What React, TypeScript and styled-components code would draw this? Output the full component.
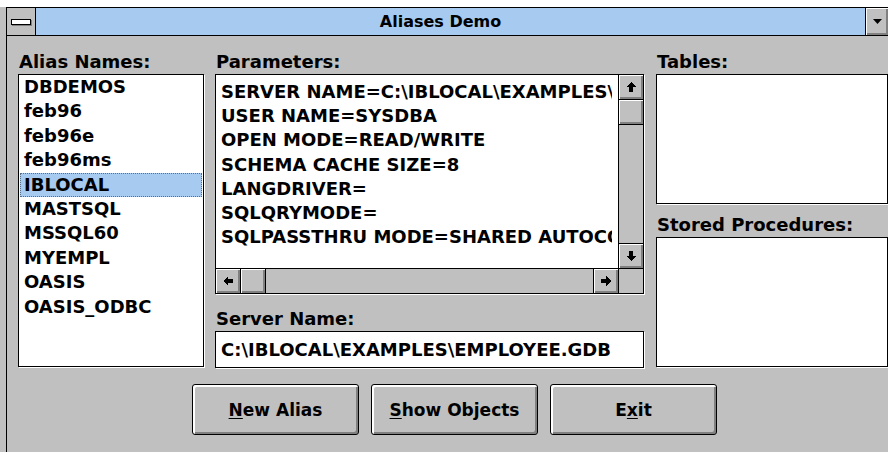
import React from "react";
import styled, { createGlobalStyle } from "styled-components";

const GlobalStyle = createGlobalStyle`
  html, body {
    margin: 0;
    padding: 0;
    overflow: hidden;
  }
  body {
    font-family: "DejaVu Sans", "Liberation Sans", sans-serif;
    color: #000;
  }
`;

const FACE = "#c0c0c0";
const SHADOW = "#808080";
const SELECT = "#a6caf0";

const Desktop = styled.div`
  width: 888px;
  height: 452px;
  box-sizing: border-box;
  background: ${FACE};
  border-top: 7px solid #fff;
  padding-left: 6px;
  overflow: hidden;
`;

const Window = styled.div`
  height: 445px;
  display: flex;
  flex-direction: column;
  border-left: 1px solid #000;
  border-top: 1px solid #000;
  box-sizing: border-box;
`;

const TitleBar = styled.div`
  display: flex;
  height: 28px;
  box-sizing: border-box;
  border-bottom: 1px solid #000;
  background: ${SELECT};
`;

const SysMenu = styled.div`
  width: 29px;
  box-sizing: border-box;
  border-right: 1px solid #000;
  background: ${FACE};
  display: flex;
  align-items: center;
  justify-content: center;
`;

const SysBar = styled.span`
  display: block;
  width: 20px;
  height: 6px;
  box-sizing: border-box;
  background: #fff;
  border: 1px solid #000;
  box-shadow: 1px 1px 0 ${SHADOW};
  margin-top: 1px;
`;

const Title = styled.div`
  flex: 1;
  text-align: center;
  font-size: 16px;
  font-weight: bold;
  line-height: 27px;
  padding-right: 20px;
  white-space: nowrap;
`;

const DropButton = styled.div`
  width: 23px;
  box-sizing: border-box;
  border-left: 1px solid #000;
  background: ${FACE};
  box-shadow: inset 1px 1px 0 #fff, inset -2px -2px 0 ${SHADOW};
  display: flex;
  align-items: center;
  justify-content: center;
`;

const Client = styled.div`
  flex: 1;
  display: flex;
  flex-direction: column;
  padding: 17px 0 0 11px;
  background: ${FACE};
`;

const Panels = styled.div`
  display: flex;
`;

const Column = styled.div<{ $width: number; $gap: number }>`
  display: flex;
  flex-direction: column;
  width: ${(p) => p.$width}px;
  margin-right: ${(p) => p.$gap}px;
  flex-shrink: 0;
`;

const Label = styled.div<{ $top?: number }>`
  font-size: 18px;
  font-weight: bold;
  line-height: 18px;
  height: 18px;
  margin-top: ${(p) => p.$top ?? 0}px;
  margin-bottom: 3px;
  padding-left: 1px;
  white-space: nowrap;
`;

const Well = styled.div<{ $height: number }>`
  height: ${(p) => p.$height}px;
  box-sizing: border-box;
  border: 1px solid #000;
  background: #fff;
  box-shadow: 1px 1px 0 #fff;
  overflow: hidden;
`;

const ListItem = styled.div<{ $selected?: boolean }>`
  font-size: 18px;
  font-weight: bold;
  line-height: 24.4px;
  height: 24.4px;
  padding-left: 4px;
  margin: 0 1px;
  white-space: nowrap;
  background: ${(p) => (p.$selected ? SELECT : "transparent")};
  outline: ${(p) => (p.$selected ? "1px dotted rgba(0,0,0,0.45)" : "none")};
  outline-offset: -1px;
`;

const MemoBox = styled.div`
  height: 220px;
  box-sizing: border-box;
  border: 1px solid #000;
  box-shadow: 1px 1px 0 #fff;
  display: grid;
  grid-template-columns: 1fr 25px;
  grid-template-rows: 1fr 25px;
  background: #fff;
  overflow: hidden;
`;

const MemoText = styled.div`
  margin-right: 6px;
  padding: 5px 0 0 5px;
  font-size: 18px;
  font-weight: bold;
  line-height: 24.2px;
  white-space: pre;
  overflow: hidden;
`;

const VScroll = styled.div`
  display: flex;
  flex-direction: column;
  border-left: 1px solid #000;
  background: ${FACE};
`;

const HScroll = styled.div`
  display: flex;
  border-top: 1px solid #000;
  background: ${FACE};
`;

const Corner = styled.div`
  border-left: 1px solid #000;
  border-top: 1px solid #000;
  background: ${FACE};
`;

const Track = styled.div`
  flex: 1;
`;

const ScrollButton = styled.div<{ $edge: "top" | "bottom" | "left" | "right" }>`
  width: ${(p) => (p.$edge === "left" || p.$edge === "right" ? "25px" : "auto")};
  height: ${(p) => (p.$edge === "top" || p.$edge === "bottom" ? "25px" : "auto")};
  box-sizing: border-box;
  flex-shrink: 0;
  border-${(p) => {
    switch (p.$edge) {
      case "top":
        return "bottom";
      case "bottom":
        return "top";
      case "left":
        return "right";
      default:
        return "left";
    }
  }}: 1px solid #000;
  background: ${FACE};
  box-shadow: inset 1px 1px 0 #fff, inset -2px -2px 0 ${SHADOW};
  display: flex;
  align-items: center;
  justify-content: center;
`;

const EditBox = styled.div`
  height: 37px;
  box-sizing: border-box;
  border: 1px solid #000;
  box-shadow: 1px 1px 0 #fff;
  background: #fff;
  font-size: 18px;
  font-weight: bold;
  line-height: 35px;
  padding-left: 5px;
  white-space: nowrap;
  overflow: hidden;
`;

const ButtonRow = styled.div`
  display: flex;
  margin-top: 16px;
  padding-left: 174px;
  gap: 12px;
`;

const PushButton = styled.div`
  width: 167px;
  height: 51px;
  box-sizing: border-box;
  border: 1px solid #000;
  border-radius: 3px;
  background: ${FACE};
  box-shadow: inset 1px 1px 0 #fff, inset 2px 2px 0 #fff, inset -2px -2px 0 ${SHADOW};
  display: flex;
  align-items: center;
  justify-content: center;
  font-size: 17px;
  font-weight: bold;
  white-space: nowrap;

  u {
    text-decoration-thickness: 1px;
    text-underline-offset: 2px;
  }
`;

type Dir = "up" | "down" | "left" | "right";

const rotation: Record<Dir, number> = { up: 0, right: 90, down: 180, left: 270 };

// Scroll arrow: a solid triangular head on a short square stem
function Arrow({ dir }: { dir: Dir }) {
  return (
    <svg
      width="10"
      height="10"
      viewBox="0 0 10 10"
      shapeRendering="crispEdges"
      style={{ transform: `rotate(${rotation[dir]}deg)` }}
    >
      <path d="M5 0 L10 5 L7 5 L7 10 L3 10 L3 5 L0 5 Z" fill="#000" />
    </svg>
  );
}

function CaretDown() {
  return (
    <svg width="9" height="5" viewBox="0 0 9 5">
      <path d="M0 0 L9 0 L4.5 5 Z" fill="#000" />
    </svg>
  );
}

const aliases = [
  "DBDEMOS",
  "feb96",
  "feb96e",
  "feb96ms",
  "IBLOCAL",
  "MASTSQL",
  "MSSQL60",
  "MYEMPL",
  "OASIS",
  "OASIS_ODBC",
];

const params = [
  "SERVER NAME=C:\\IBLOCAL\\EXAMPLES\\EMPLOYEE.GDB",
  "USER NAME=SYSDBA",
  "OPEN MODE=READ/WRITE",
  "SCHEMA CACHE SIZE=8",
  "LANGDRIVER=",
  "SQLQRYMODE=",
  "SQLPASSTHRU MODE=SHARED AUTOCOMMIT",
];

export default function App() {
  return (
    <>
      <GlobalStyle />
      <Desktop>
        <Window>
          <TitleBar>
            <SysMenu>
              <SysBar />
            </SysMenu>
            <Title>Aliases Demo</Title>
            <DropButton>
              <CaretDown />
            </DropButton>
          </TitleBar>
          <Client>
            <Panels>
              <Column $width={186} $gap={11}>
                <Label>Alias Names:</Label>
                <Well $height={293}>
                  {aliases.map((a) => (
                    <ListItem key={a} $selected={a === "IBLOCAL"}>
                      {a}
                    </ListItem>
                  ))}
                </Well>
              </Column>
              <Column $width={429} $gap={12}>
                <Label>Parameters:</Label>
                <MemoBox>
                  <MemoText>{params.join("\n")}</MemoText>
                  <VScroll>
                    <ScrollButton $edge="top">
                      <Arrow dir="up" />
                    </ScrollButton>
                    <ScrollButton $edge="top" />
                    <Track />
                    <ScrollButton $edge="bottom">
                      <Arrow dir="down" />
                    </ScrollButton>
                  </VScroll>
                  <HScroll>
                    <ScrollButton $edge="left">
                      <Arrow dir="left" />
                    </ScrollButton>
                    <ScrollButton $edge="left" />
                    <Track />
                    <ScrollButton $edge="right">
                      <Arrow dir="right" />
                    </ScrollButton>
                  </HScroll>
                  <Corner />
                </MemoBox>
                <Label $top={16}>Server Name:</Label>
                <EditBox>C:\IBLOCAL\EXAMPLES\EMPLOYEE.GDB</EditBox>
              </Column>
              <Column $width={232} $gap={0}>
                <Label>Tables:</Label>
                <Well $height={130} />
                <Label $top={12}>Stored Procedures:</Label>
                <Well $height={130} />
              </Column>
            </Panels>
            <ButtonRow>
              <PushButton>
                <span>
                  <u>N</u>ew Alias
                </span>
              </PushButton>
              <PushButton>
                <span>
                  <u>S</u>how Objects
                </span>
              </PushButton>
              <PushButton>
                <span>
                  E<u>x</u>it
                </span>
              </PushButton>
            </ButtonRow>
          </Client>
        </Window>
      </Desktop>
    </>
  );
}
